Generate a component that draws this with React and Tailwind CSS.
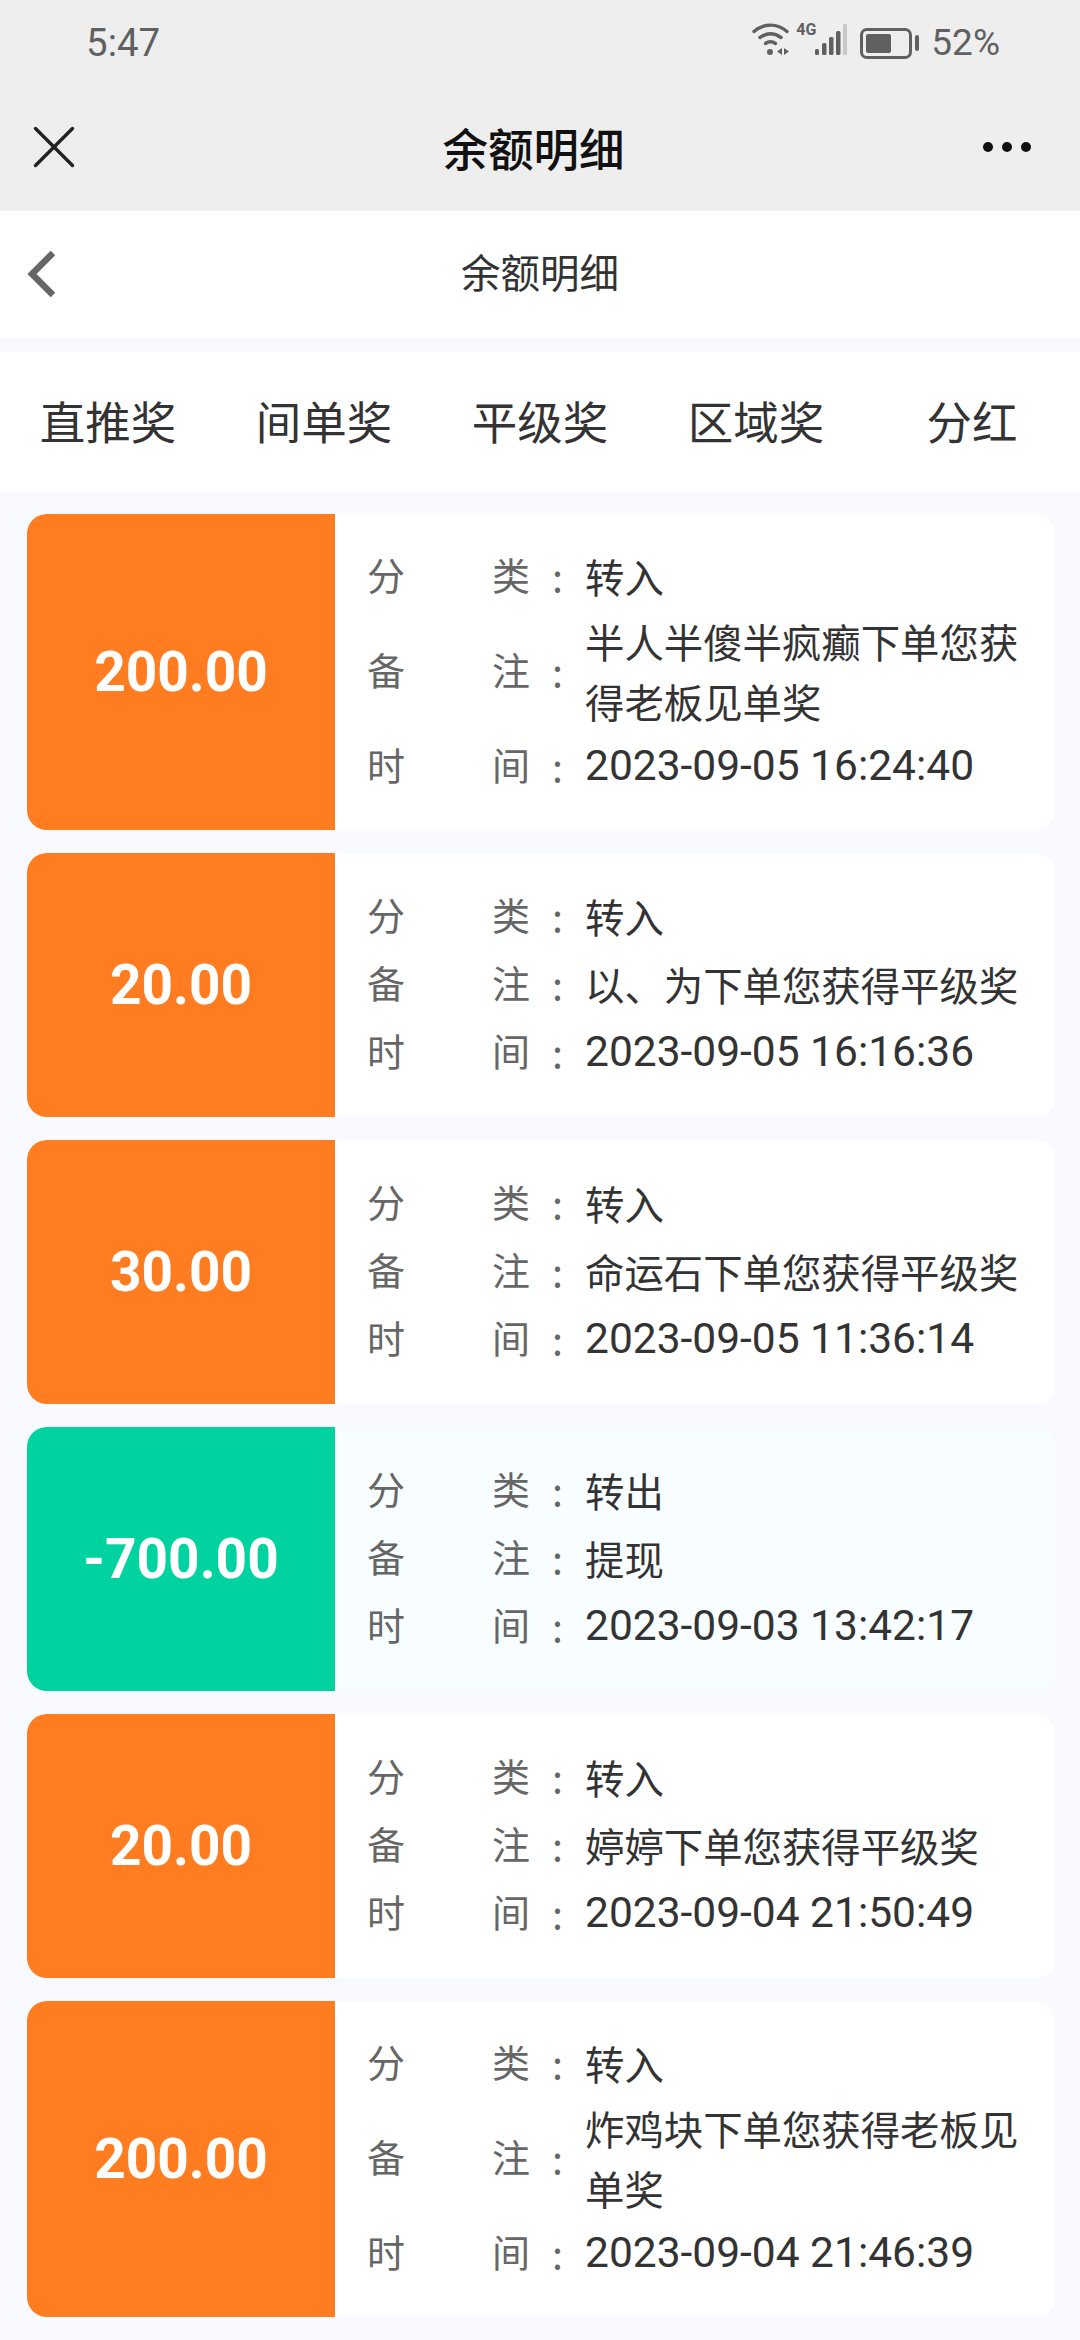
import { X } from "lucide-react";

const tabs = ["直推奖", "间单奖", "平级奖", "区域奖", "分红"];

const rows = [
  { amount: "200.00", type: "转入", note: "半人半傻半疯癫下单您获得老板见单奖", time: "2023-09-05 16:24:40" },
  { amount: "20.00", type: "转入", note: "以、为下单您获得平级奖", time: "2023-09-05 16:16:36" },
  { amount: "30.00", type: "转入", note: "命运石下单您获得平级奖", time: "2023-09-05 11:36:14" },
  { amount: "-700.00", type: "转出", note: "提现", time: "2023-09-03 13:42:17", out: true },
  { amount: "20.00", type: "转入", note: "婷婷下单您获得平级奖", time: "2023-09-04 21:50:49" },
  { amount: "200.00", type: "转入", note: "炸鸡块下单您获得老板见单奖", time: "2023-09-04 21:46:39" },
];

function StatusIcons() {
  return (
    <svg width="98" height="36" viewBox="0 0 98 36" className="text-[#606060]">
      <g fill="none" stroke="currentColor" strokeLinecap="round" strokeWidth="3.4">
        <path d="M2 9.500C12 1 25 1 35 9.500" />
        <path d="M8 15.500c7-5 14-5 21 0" />
        <path d="M13.500 21.500c3.500-2.500 6.500-2.500 10 0" />
      </g>
      <circle cx="18" cy="30" r="3" fill="currentColor" />
      <path d="M30 26v7l-5-3.500zM32 26v7l5-3.500z" fill="currentColor" />
      <rect x="63" y="27" width="4" height="6" rx="1.500" fill="currentColor" />
      <rect x="70" y="21" width="4.500" height="12" rx="1.500" fill="currentColor" />
      <rect x="77" y="15" width="4.500" height="18" rx="1.500" fill="currentColor" />
      <rect x="84" y="9" width="4.500" height="24" rx="1.500" fill="currentColor" />
      <rect x="91" y="2" width="4" height="31" rx="1" fill="#c8c8c8" />
    </svg>
  );
}

function Row({ label1, label2, children }) {
  return (
    <div className="flex items-center text-[39.4px] leading-[60px]">
      <div className="flex w-[163px] justify-between pb-[4px] text-[38px] leading-[52px] text-[#666666]">
        <span>{label1}</span>
        <span>{label2}</span>
      </div>
      <span className="w-[55px] pl-[22px] text-[#666666]">:</span>
      <div className="w-[445px] text-[#333333]">{children}</div>
    </div>
  );
}

export default function App() {
  return (
    <div className="min-h-[2340px] w-[1080px] overflow-hidden bg-[#f8faff] font-['Noto_Sans_CJK_SC','Noto_Sans',sans-serif]">
      <div className="h-[211px] bg-[#eeeeee]">
        <div className="flex h-[88px] items-start justify-between pl-[86px] pr-[80px] pt-[20px] text-[#606060]">
          <span className="font-['Roboto'] text-[38.500px] leading-[46px]">5:47</span>
          <div className="flex items-center">
            <div className="relative mb-[6px]">
              <StatusIcons />
              <span className="absolute left-[44px] top-[-1px] font-['Roboto'] text-[16px] font-bold leading-[18px]">4G</span>
            </div>
            <div className="ml-[10px] flex items-center">
              <div className="h-[31px] w-[52px] rounded-[7px] border-[3px] border-[#606060] p-[3px]">
                <div className="h-full w-[25px] rounded-[2px] bg-[#606060]" />
              </div>
              <div className="ml-[3px] h-[16px] w-[4px] rounded-full bg-[#606060]" />
            </div>
            <span className="ml-[12px] font-['Roboto'] text-[37px] leading-[46px]">52%</span>
          </div>
        </div>
        <div className="flex h-[123px] items-center justify-between pb-[6px] pl-[17px] pr-[49px]">
          <X size={74} strokeWidth={1.100} className="text-[#222222]" />
          <span className="mr-[7px] text-[45.500px] font-medium leading-[60px] text-[#111111]">余额明细</span>
          <div className="flex gap-[9px]">
            <span className="h-[10px] w-[10px] rounded-full bg-[#111111]" />
            <span className="h-[10px] w-[10px] rounded-full bg-[#111111]" />
            <span className="h-[10px] w-[10px] rounded-full bg-[#111111]" />
          </div>
        </div>
      </div>

      <div className="relative flex h-[126px] items-center justify-center bg-white pb-[6px]">
        <svg width="28" height="46" viewBox="0 0 28 46" className="absolute left-[27px] top-[40px]">
          <polyline points="26,2 5,23 26,44" fill="none" stroke="#666666" strokeWidth="6.500" />
        </svg>
        <span className="text-[39.500px] leading-[52px] text-[#333333]">余额明细</span>
      </div>

      <div className="mt-[15px] grid h-[140px] grid-cols-5 items-center bg-white pb-[5px]">
        {tabs.map((tab) => (
          <span key={tab} className="text-center text-[45.500px] leading-[60px] text-[#333333]">{tab}</span>
        ))}
      </div>

      <div className="flex flex-col gap-[23px] pl-[27px] pr-[25px] pt-[22px]">
        {rows.map((row, i) => {
          const tall = row.note.length > 12;
          return (
            <div key={i} className={`flex rounded-[20px] ${row.out ? "bg-[#f8feff]" : "bg-white"} ${tall ? "h-[316px]" : "h-[264px]"}`}>
              <div className={`flex w-[308px] shrink-0 items-center justify-center rounded-l-[20px] font-['Roboto'] text-[55px] font-bold text-white ${row.out ? "bg-[#00d2a0]" : "bg-[#ff7d20]"}`}>
                {row.amount}
              </div>
              <div className={`flex flex-col justify-center pb-[2px] pl-[32px] ${tall ? "gap-[5px]" : "gap-[8px]"}`}>
                <Row label1="分" label2="类">{row.type}</Row>
                <Row label1="备" label2="注">{row.note}</Row>
                <Row label1="时" label2="间"><span className="block whitespace-nowrap font-['Roboto'] text-[42.500px] leading-[60px]">{row.time}</span></Row>
              </div>
            </div>
          );
        })}
      </div>
    </div>
  );
}
